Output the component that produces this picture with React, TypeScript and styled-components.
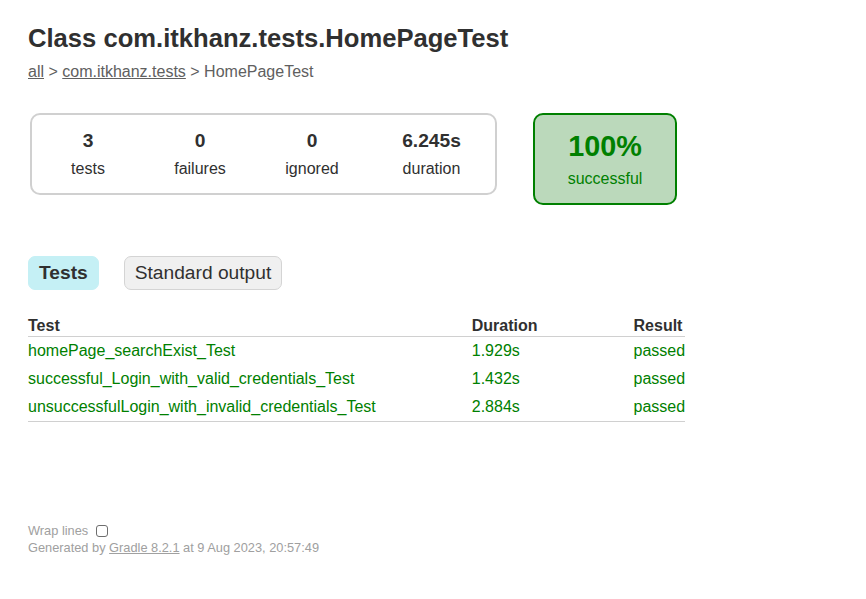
import React from "react";
import styled, { createGlobalStyle } from "styled-components";

const GlobalStyle = createGlobalStyle`
  html, body {
    margin: 0;
    padding: 0;
    background: #ffffff;
  }
  body {
    font-family: "Liberation Sans", Arial, Helvetica, sans-serif;
    font-size: 16px;
    color: #303030;
  }
`;

const Content = styled.div`
  padding: 24px 28px 30px 28px;
`;

const Title = styled.h1`
  margin: 0 0 10px 0;
  font-size: 25.6px;
  line-height: 29px;
  font-weight: bold;
  white-space: nowrap;
  color: #303030;
`;

const Breadcrumbs = styled.div`
  font-size: 16px;
  line-height: 18px;
  color: #606060;
`;

const Crumb = styled.a`
  color: #606060;
  text-decoration: underline;
`;

const SummaryRow = styled.div`
  display: flex;
  align-items: flex-start;
  margin-top: 32px;
  margin-left: 2px;
`;

const SummaryGroup = styled.div`
  display: flex;
  border: solid 2px #d0d0d0;
  border-radius: 10px;
`;

const InfoBox = styled.div<{ $w: number }>`
  width: ${(p) => p.$w}px;
  padding: 15px 0;
  text-align: center;
`;

const Counter = styled.div<{ $big?: boolean }>`
  font-size: ${(p) => (p.$big ? "28.8px" : "19.2px")};
  line-height: ${(p) => (p.$big ? "32px" : "22px")};
  font-weight: bold;
  margin-bottom: 8px;
`;

const Label = styled.div`
  font-size: 16px;
  line-height: 18px;
`;

const SuccessRate = styled.div`
  width: 140px;
  margin-left: 36px;
  padding: 15px 0;
  text-align: center;
  border: solid 2px #008000;
  border-radius: 10px;
  background-color: #bbd9bb;
  color: #008000;
`;

const TabLinks = styled.ul`
  display: flex;
  list-style: none;
  margin: 51px 0 0 0;
  padding: 0;
`;

const Tab = styled.li<{ $selected?: boolean }>`
  padding: 5px 10px;
  margin-right: 25px;
  border-radius: 7px;
  border: solid 1px ${(p) => (p.$selected ? "#c5f0f5" : "#d4d4d4")};
  background-color: ${(p) => (p.$selected ? "#c5f0f5" : "#f0f0f0")};
  font-size: 19.2px;
  line-height: 22px;
  font-weight: ${(p) => (p.$selected ? "bold" : "normal")};
  color: #303030;
`;

const Table = styled.table`
  margin-top: 26px;
  border-collapse: collapse;
  border-bottom: solid 1px #d0d0d0;
`;

const Th = styled.th`
  text-align: left;
  white-space: nowrap;
  padding: 1px 0 1px 96px;
  font-size: 16px;
  line-height: 18px;
  font-weight: bold;
  border-bottom: solid 1px #d0d0d0;
  &:first-child {
    padding-left: 0;
  }
`;

const Td = styled.td`
  white-space: nowrap;
  padding: 5px 0 5px 96px;
  font-size: 16px;
  line-height: 18px;
  color: #008000;
  &:first-child {
    padding-left: 0;
  }
`;

const Footer = styled.div`
  margin-top: 100px;
  font-size: 12.8px;
  color: #a0a0a0;
  white-space: nowrap;
`;

const WrapRow = styled.label`
  display: flex;
  align-items: center;
  height: 18px;
  line-height: 18px;
`;

const CheckBox = styled.input`
  appearance: none;
  -webkit-appearance: none;
  width: 12px;
  height: 12px;
  margin: 0 0 0 8px;
  border: solid 1px #6e6e6e;
  border-radius: 3px;
  background: #ffffff;
`;

const Generated = styled.div`
  line-height: 15px;
`;

const FooterLink = styled.a`
  color: #a0a0a0;
  text-decoration: underline;
`;

const tests = [
  { name: "homePage_searchExist_Test", duration: "1.929s" },
  { name: "successful_Login_with_valid_credentials_Test", duration: "1.432s" },
  { name: "unsuccessfulLogin_with_invalid_credentials_Test", duration: "2.884s" },
];

export default function App() {
  return (
    <>
      <GlobalStyle />
      <Content>
        <Title>Class com.itkhanz.tests.HomePageTest</Title>
        <Breadcrumbs>
          <Crumb href="#">all</Crumb> &gt; <Crumb href="#">com.itkhanz.tests</Crumb> &gt; HomePageTest
        </Breadcrumbs>
        <SummaryRow>
          <SummaryGroup>
            <InfoBox $w={112}>
              <Counter>3</Counter>
              <Label>tests</Label>
            </InfoBox>
            <InfoBox $w={112}>
              <Counter>0</Counter>
              <Label>failures</Label>
            </InfoBox>
            <InfoBox $w={112}>
              <Counter>0</Counter>
              <Label>ignored</Label>
            </InfoBox>
            <InfoBox $w={127}>
              <Counter>6.245s</Counter>
              <Label>duration</Label>
            </InfoBox>
          </SummaryGroup>
          <SuccessRate>
            <Counter $big>100%</Counter>
            <Label>successful</Label>
          </SuccessRate>
        </SummaryRow>
        <TabLinks>
          <Tab $selected>Tests</Tab>
          <Tab>Standard output</Tab>
        </TabLinks>
        <Table>
          <thead>
            <tr>
              <Th>Test</Th>
              <Th>Duration</Th>
              <Th>Result</Th>
            </tr>
          </thead>
          <tbody>
            {tests.map((t) => (
              <tr key={t.name}>
                <Td>{t.name}</Td>
                <Td>{t.duration}</Td>
                <Td>passed</Td>
              </tr>
            ))}
          </tbody>
        </Table>
        <Footer>
          <WrapRow>
            Wrap lines
            <CheckBox type="checkbox" autoComplete="off" />
          </WrapRow>
          <Generated>
            Generated by <FooterLink href="#">Gradle 8.2.1</FooterLink> at 9 Aug 2023, 20:57:49
          </Generated>
        </Footer>
      </Content>
    </>
  );
}
